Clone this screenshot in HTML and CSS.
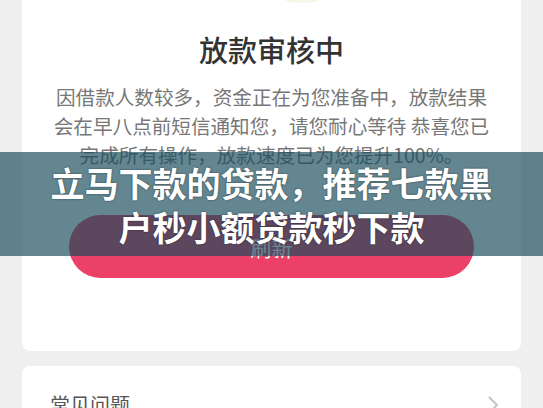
FILE: index.html
```html
<!DOCTYPE html>
<html lang="zh-CN">

<head>
    <meta charset="UTF-8" />
    <meta name="viewport" content="width=device-width, initial-scale=1.0" />
    <title>放款审核中</title>
    <link rel="stylesheet" href="styles.css">
</head>

<body>
    <div class="page">
        <div class="card status-card">
            <div class="glow"></div>
            <h1 class="status-title">放款审核中</h1>
            <p class="status-text">因借款人数较多，资金正在为您准备中，放款结果会在早八点前短信通知您，请您耐心等待 恭喜您已完成所有操作，放款速度已为您提升100%。</p>
            <button class="refresh-btn">刷新</button>
        </div>

        <div class="card faq-card">
            <span class="faq-title">常见问题</span>
            <svg class="chevron" width="12" height="20" viewBox="0 0 12 20">
                <path d="M2 2 L10 10 L2 18" fill="none" stroke="#c4c4c4" stroke-width="2" />
            </svg>
        </div>
    </div>

    <!-- headline banner over the page -->
    <div class="banner">
        <div class="banner-text">立马下款的贷款，推荐七款黑户秒小额贷款秒下款</div>
    </div>
</body>

</html>
```

FILE: styles.css
```css
* {
    margin: 0;
    padding: 0;
    box-sizing: border-box;
}

html,
body {
    width: 100%;
    height: 100%;
    overflow: hidden;
    background: #efefef;
    font-family: "Noto Sans CJK SC", "Noto Sans", sans-serif;
}

.page {
    display: flex;
    flex-direction: column;
    gap: 15px;
    padding: 0 22px;
}

.card {
    background: #fff;
    border-radius: 8px;
}

.status-card {
    position: relative;
    display: flex;
    flex-direction: column;
    align-items: center;
    padding: 31px 29px 73px;
    border-top-left-radius: 0;
    border-top-right-radius: 0;
}

.glow {
    position: absolute;
    top: -5px;
    left: 262px;
    width: 36px;
    height: 8px;
    border-radius: 50%;
    background: #f8f6e6;
}

.status-title {
    font-size: 29px;
    line-height: 36px;
    font-weight: 500;
    color: #333;
}

.status-text {
    margin-top: 15px;
    width: 441px;
    font-size: 19.6px;
    line-height: 29px;
    color: #777;
    text-align: center;
}

.refresh-btn {
    margin-top: 46px;
    width: 405px;
    height: 63px;
    border: none;
    border-radius: 32px;
    background: #ec4068;
    color: #fff;
    font-family: inherit;
    font-size: 21px;
}

.faq-card {
    display: flex;
    align-items: center;
    justify-content: space-between;
    padding: 24px 22px 30px 28px;
}

.faq-title {
    font-size: 20px;
    color: #555;
}

.banner {
    position: absolute;
    top: 152px;
    left: 0;
    width: 100%;
    height: 104px;
    padding-top: 9px;
    background: rgba(22, 74, 91, 0.67);
    display: flex;
    justify-content: center;
}

.banner-text {
    width: 450px;
    font-size: 34px;
    line-height: 44px;
    font-weight: 700;
    color: #fff;
    text-align: center;
    text-shadow: 0 0 2px rgba(0, 0, 0, 0.6);
}
```
